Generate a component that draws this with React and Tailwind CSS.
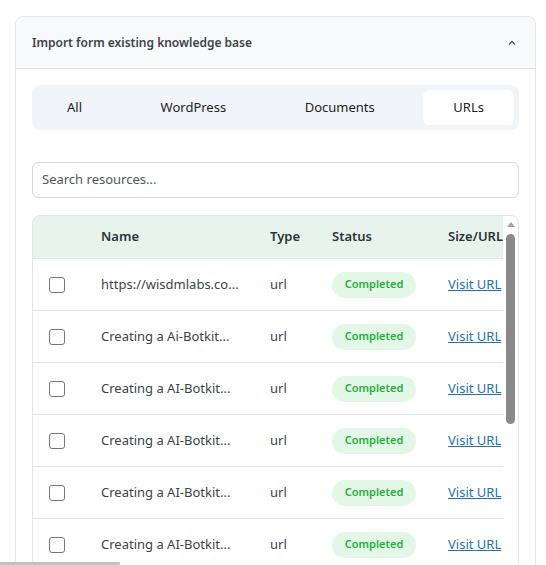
import React from "react";

const TABS = ["All", "WordPress", "Documents", "URLs"];

const ROWS = [
  "https://wisdmlabs.co...",
  "Creating a Ai-Botkit...",
  "Creating a AI-Botkit...",
  "Creating a AI-Botkit...",
  "Creating a AI-Botkit...",
  "Creating a AI-Botkit...",
  "Creating a AI-Botkit...",
];

const COLS = "grid grid-cols-[68px_169px_62px_116px_1fr] items-center";

const App = () => {
  return (
    <div
      className="h-screen overflow-hidden bg-white pl-[15px] pt-4"
      style={{ fontFamily: '"Noto Sans", "Open Sans", sans-serif' }}
    >
      <div className="w-[521px] rounded-lg border border-[#e3e5e8] bg-white">
        {/* Accordion header */}
        <div className="flex h-[52px] items-center justify-between rounded-t-lg border-b border-[#e3e5e8] bg-[#f8f9fa] pl-4 pr-[19px]">
          <span className="text-[12px] font-semibold text-[#3c434a]">Import form existing knowledge base</span>
          <svg width="8" height="6" viewBox="0 0 8 6" fill="none">
            <polyline points="1,4.5 4,1.5 7,4.5" stroke="#50575e" strokeWidth="1.4" />
          </svg>
        </div>

        <div className="px-4 pt-4">
          {/* Tabs */}
          <div className="flex h-[45px] items-center justify-between rounded-lg bg-[#f1f4f8] p-[5px]">
            {TABS.map((tab) => (
              <div
                key={tab}
                className={`flex h-[35px] items-center rounded-md px-[30px] text-[13px] text-[#1d2327] ${
                  tab === "URLs" ? "bg-white" : ""
                }`}
              >
                {tab}
              </div>
            ))}
          </div>

          {/* Search */}
          <div className="mt-8 flex h-9 items-center rounded-md border border-[#d5d7dc] px-[9px] text-[13px] text-[#50575e]">
            Search resources...
          </div>

          {/* Table */}
          <div className="mt-[17px] flex overflow-hidden rounded-lg border border-[#e3e5e8]">
            <div className="min-w-0 flex-1 overflow-hidden">
              <div className={`${COLS} h-[42px] bg-[#e8f3ee] text-[13px] font-semibold text-[#2c3338] whitespace-nowrap`}>
                <span />
                <span>Name</span>
                <span>Type</span>
                <span>Status</span>
                <span>Size/URL</span>
              </div>
              {ROWS.map((name, i) => (
                <div
                  key={i}
                  className={`${COLS} h-[52px] border-t border-[#e3e5e8] text-[13px] text-[#3c434a] whitespace-nowrap`}
                >
                  <span className="pl-[16px]">
                    <span className="block h-4 w-4 rounded-[3px] border border-[#767676] bg-white" />
                  </span>
                  <span>{name}</span>
                  <span>url</span>
                  <span>
                    <span className="inline-flex h-[26px] w-[84px] items-center justify-center rounded-full bg-[#e3f7e6] text-[11px] font-semibold text-[#1fae3a]">
                      Completed
                    </span>
                  </span>
                  <span className="text-[#2271b1] underline">Visit URL</span>
                </div>
              ))}
            </div>

            {/* Scrollbar */}
            <div className="flex w-[15px] flex-col items-center bg-white pt-[6px]">
              <svg width="8" height="5" viewBox="0 0 8 5">
                <polygon points="0,5 4,0 8,5" fill="#a3a3a3" />
              </svg>
              <div className="mt-[7px] h-[190px] w-[9px] rounded-full bg-[#8a8a8a]" />
            </div>
          </div>
        </div>
      </div>

      {/* Page horizontal scrollbar thumb */}
      <div className="fixed bottom-0 left-0 h-[3px] w-[120px] rounded-r-full bg-[#c1c1c1]" />
    </div>
  );
};

export default App;
